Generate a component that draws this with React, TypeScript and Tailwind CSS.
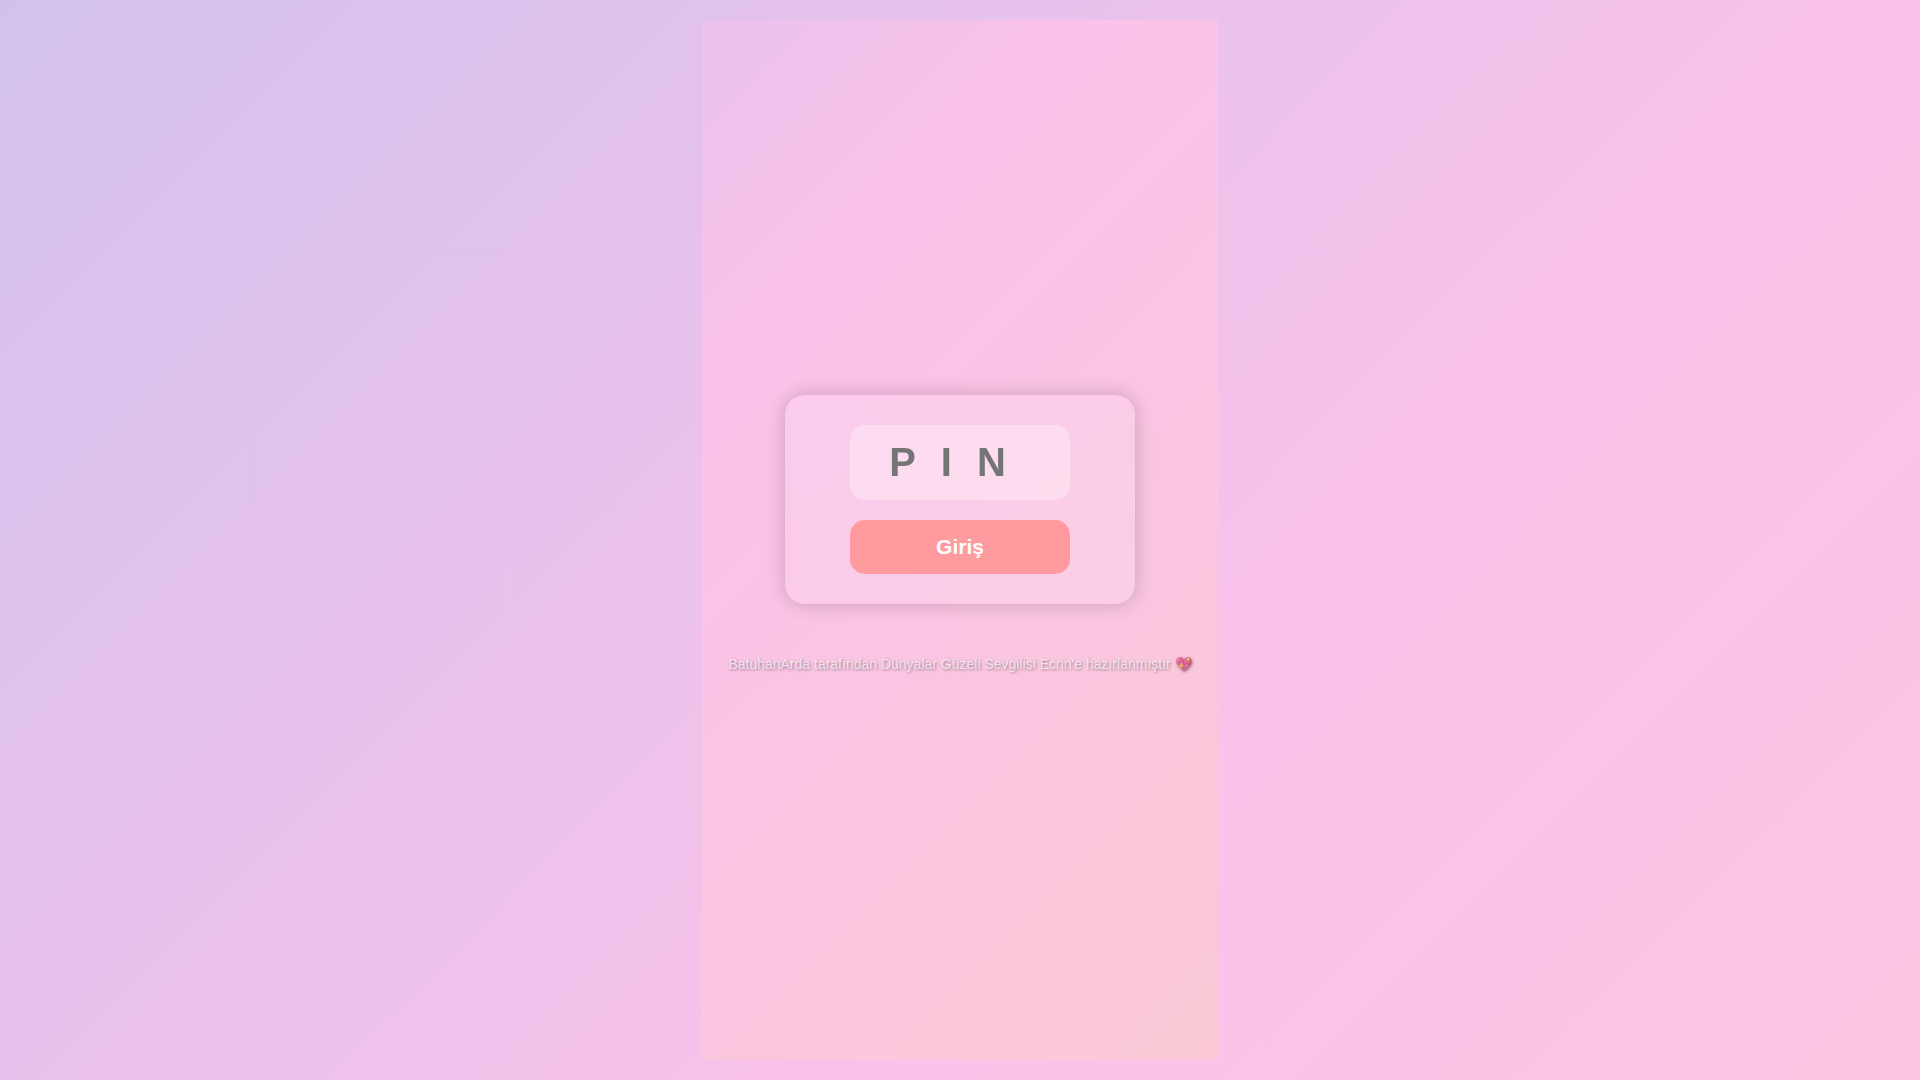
import { useState } from "react"

export default function App() {
  const [pin, setPin] = useState("")

  return (
    <div className="flex min-h-screen justify-center bg-[linear-gradient(135deg,#a6c1ee,#fbc2eb,#fad0c4,#ff9a9e)] bg-size-[400%_400%] bg-position-[7%_50%] p-5 font-['Liberation_Sans',Arial,sans-serif]">
      <main className="flex w-full max-w-[516px] flex-col items-center justify-center bg-[linear-gradient(135deg,#a6c1ee,#fbc2eb,#fad0c4,#ff9a9e)] bg-size-[400%_400%] bg-position-[7%_50%] p-5">
        <form
          onSubmit={(e) => e.preventDefault()}
          className="flex w-[350px] max-w-full flex-col items-center gap-5 rounded-[20px] bg-white/15 p-[30px] shadow-[0_0_20px_rgba(0,0,0,0.2)] backdrop-blur-[10px]"
        >
          <input
            type="password"
            inputMode="numeric"
            maxLength={4}
            placeholder="PIN"
            aria-label="PIN"
            value={pin}
            onChange={(e) => setPin(e.target.value)}
            className="w-[220px] rounded-[15px] bg-white/30 p-[15px] text-center text-[40px] leading-[45px] font-bold tracking-[25px] text-white outline-none placeholder:text-[#757575]"
          />
          <button
            type="submit"
            className="w-[220px] cursor-pointer rounded-[15px] bg-[#ff9a9e] py-[15px] text-[21px] leading-6 font-bold text-white"
          >
            Giriş
          </button>
        </form>
        <p className="mt-[50px] mb-3 text-center text-[14px] leading-5 text-white/70 text-shadow-[1px_1px_3px_rgba(0,0,0,0.4)]">
          BatuhanArda tarafından Dünyalar Güzeli Sevgilisi Ecrin'e hazırlanmıştır 💖
        </p>
      </main>
    </div>
  )
}
